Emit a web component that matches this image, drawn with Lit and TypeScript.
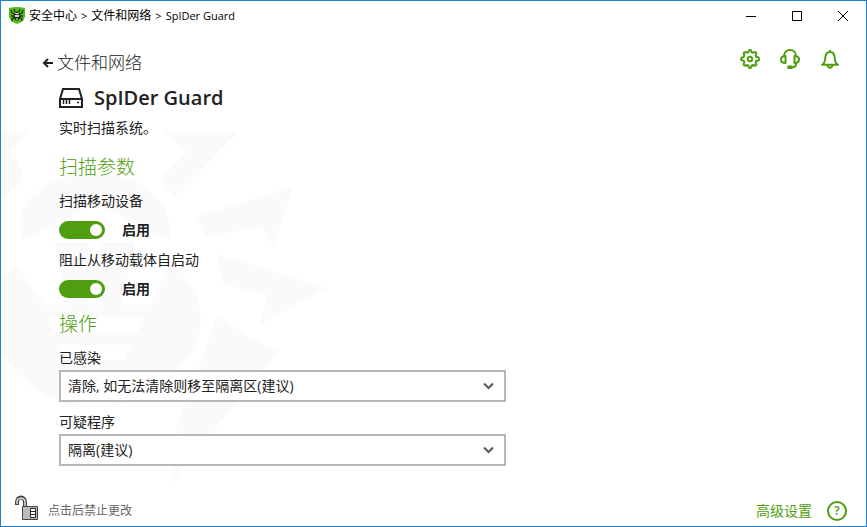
import { LitElement, html, css, svg } from "lit";
import { customElement, property } from "lit/decorators.js";

const gear = svg`<path d="M8.500 3.100Q8.600 1 10 1t1.500 2.100l1.600.7q1.600-1.300 2.700-.3t-.2 2.600l.8 1.900Q19 7.500 19 10t-2.600 1.500l-.8 2q1.300 1.700.3 2.700t-2.700-.3l-1.700.8Q11.500 19 10 19t-1.500-2.300l-1.700-.8q-1.700 1.300-2.700.3t.3-2.700l-.8-2Q1 11.500 1 10t2.600-2l.8-1.900q-1.300-1.600-.2-2.600t2.700.3z"/><circle cx="10" cy="10" r="2.200"/>`;
const headset = svg`<path d="M4 7.500C4 3.500 6.500 1 10 1s6 2.500 6 6.500M5.500 7C2.500 7 1 8.500 1 10.500S2.500 14 5.500 14zM14.500 7c3 0 4.500 1.500 4.500 3.500S17.500 14 14.500 14zM16 14v1.500c0 1.800-1.500 2.700-4 2.700"/><ellipse class="solid" cx="10" cy="18.300" rx="2" ry="1"/>`;
const bell = svg`<path d="M10 1v2M2 15.800c2.300-1.300 3-3.300 3.200-6.300C5.400 5.300 7 3 10 3s4.600 2.300 4.800 6.500c.2 3 .9 5 3.200 6.300zM7.700 16.500c.3 1.500 1.200 2.200 2.300 2.200s2-.7 2.300-2.200"/>`;

@customElement("toggle-row")
class ToggleRow extends LitElement {
  @property() name = "";

  static styles = css`
    :host { display: block; }
    .name { line-height: 20px; }
    .row { display: flex; align-items: center; gap: 17px; height: 37px; font-weight: 700; }
    .switch {
      appearance: none; flex: none; width: 46px; height: 18px; margin: 0;
      padding: 3px; border-radius: 9px; background: #aaa; display: flex;
    }
    .switch::before { content: ""; width: 12px; height: 12px; border-radius: 50%; background: #fff; }
    .switch:checked { background: #4f9e10; justify-content: flex-end; }
  `;

  render() {
    return html`
      <div class="name" id="name">${this.name}</div>
      <label class="row">
        <input class="switch" type="checkbox" role="switch" checked aria-describedby="name" />
        <span>启用</span>
      </label>
    `;
  }
}

@customElement("action-select")
class ActionSelect extends LitElement {
  @property() name = "";
  @property() value = "";

  static styles = css`
    :host { display: block; }
    .name { display: block; line-height: 20px; margin-bottom: 2px; }
    .box { position: relative; }
    .select {
      appearance: none; display: block; box-sizing: border-box; width: 100%; height: 32px;
      margin: 0; padding: 0 32px 0 7px; border: 2px solid #b7b7b7; border-radius: 0;
      background: #fff; color: #222; font: inherit;
    }
    .arrow {
      position: absolute; right: 12px; top: 11px; width: 11px; height: 10px;
      fill: none; stroke: #555; stroke-width: 2; pointer-events: none;
    }
  `;

  render() {
    return html`
      <label class="name" for="select">${this.name}</label>
      <div class="box">
        <select class="select" id="select"><option>${this.value}</option></select>
        <svg class="arrow" viewBox="0 0 11 10"><path d="M1 2.500 5.500 7 10 2.500" /></svg>
      </div>
    `;
  }
}

@customElement("app-root")
class AppRoot extends LitElement {
  static styles = css`
    :host { display: block; }
    .window {
      position: relative; box-sizing: border-box; min-height: 100vh; border: 1px solid #1c80d3;
      display: flex; flex-direction: column; background: #fff; color: #222;
      font: 14px/20px "Open Sans", "Noto Sans CJK SC", sans-serif;
    }
    .mark { position: absolute; left: 0; top: 131px; width: 327px; height: 354px; fill: #fafafa; pointer-events: none; }
    .mark .gap { fill: #fff; }
    .titlebar, .main, .footer { position: relative; }
    .titlebar { display: flex; align-items: center; height: 29px; padding-left: 8px; color: #000; font-size: 12px; }
    .logo { width: 16px; height: 17px; margin-right: 4px; }
    .path { flex: 1; display: flex; align-items: baseline; gap: 4px; }
    .latin { font-size: 11px; }
    button { border: 0; padding: 0; margin: 0; background: none; color: inherit; font: inherit; cursor: pointer; }
    .caption { width: 46px; height: 29px; display: grid; place-items: center; }
    .caption svg { width: 12px; height: 12px; fill: none; stroke: #000; }
    .main { flex: 1; display: flex; justify-content: space-between; align-items: flex-start; padding: 19px 26px 0 41px; }
    .column { flex: 0 1 464px; }
    .back { display: flex; align-items: center; gap: 4px; font-size: 17px; line-height: 28px; font-weight: 300; color: #222; text-decoration: none; }
    .back svg { width: 11px; height: 10px; fill: none; stroke: #222; stroke-width: 2; }
    .content { padding-left: 17px; }
    .heading { display: flex; align-items: center; gap: 11px; height: 41px; margin: 0; font-size: 20px; font-weight: 600; }
    .heading svg { width: 24px; height: 20px; fill: none; stroke: #222; stroke-width: 2; }
    .heading .thin { stroke-width: 1.500; }
    .about { margin: 0; }
    .group { margin: 15px 0 10px; font-size: 19px; line-height: 28px; font-weight: 300; color: #4f9e10; }
    .toggles { display: grid; gap: 2px; }
    .actions { display: grid; gap: 10px; }
    .toggles + .group { margin-top: 3px; }
    .tools { display: flex; gap: 20px; }
    .tools button { width: 20px; height: 20px; }
    .tools svg { display: block; width: 20px; height: 20px; fill: none; stroke: #4f9e10; stroke-width: 2; stroke-linejoin: round; }
    .tools .solid { fill: #4f9e10; }
    .footer { display: flex; justify-content: space-between; align-items: center; height: 31px; padding: 0 19px 0 13px; }
    .lock { display: flex; align-items: center; gap: 10px; color: #666; font-size: 12px; }
    .lock svg { width: 24px; height: 25px; margin-top: -6px; }
    .links { display: flex; align-items: center; gap: 15px; }
    .advanced { color: #4f9e10; text-decoration: none; }
    .help { width: 20px; height: 20px; box-sizing: border-box; border: 2px solid #4f9e10; border-radius: 50%; color: #4f9e10; font: 600 12px/16px "Open Sans", sans-serif; }
  `;

  render() {
    return html`
      <div class="window">
        <svg class="mark" viewBox="1 132 327 354" aria-hidden="true">
          <path d="M1 132H28L12 150 25 179 1 200zM162 132h77L175 197 159 178 188 152zM294 186 273 247 262 227 206 237 195 217zM217 254 327 288 259 325 268 296 223 284zM217 317 278 352 170 484 185 434 175 432z" />
          <path d="M23 241C17 222 22 203 36 193 45 183 65 174 95 174s50 9 58 20c15 14 20 30 15 47L95 203z" />
          <path d="M1 278 17 265 44 305H150L170 265C188 275 201 295 201 320c0 35-34 66-88 88l-8-23H86l-9 22C48 400 20 383 1 352z" />
          <path class="gap" d="M48 317h95l-5 15H54zM58 345h73l-6 15H62z" />
          <path d="M55 242h33l7 20 7-20h33l-14 63h-18l-8-22-8 22H69z" />
        </svg>
        <header class="titlebar">
          <svg class="logo" viewBox="0 0 16 17" aria-hidden="true">
            <path fill="#54bd18" d="M0 1q8-2 16 0v8q0 5-8 8-8-3-8-8z" />
            <path fill="none" stroke="#172b0c" stroke-width="1.300" d="M6 7 3 6 2 3M6 9 2 9M6 10 3 12v2M10 7l3-1 1-3M10 9h4M10 10l3 2v2M6 5 5 2M10 5l1-3" />
            <ellipse cx="8" cy="9" rx="3" ry="4.500" fill="#172b0c" />
            <path fill="none" stroke="#fff" d="m6 6 2 1 2-1M6 8l1 2 1-2 1 2 1-2M7 12h2" />
          </svg>
          <div class="path">
            <span>安全中心</span><span class="latin">&gt;</span>
            <span>文件和网络</span><span class="latin">&gt;</span>
            <span class="latin">SpIDer Guard</span>
          </div>
          <button class="caption" aria-label="最小化"><svg viewBox="0 0 12 12"><path d="M1 6.500h10" /></svg></button>
          <button class="caption" aria-label="最大化"><svg viewBox="0 0 12 12"><path d="M1.500 1.500h9v9h-9z" /></svg></button>
          <button class="caption" aria-label="关闭"><svg viewBox="0 0 12 12"><path d="m1 1 10 10M11 1 1 11" /></svg></button>
        </header>
        <main class="main">
          <div class="column">
            <a class="back" href="#"><svg viewBox="0 0 11 10"><path d="M11 5H2M6 1 2 5l4 4" /></svg>文件和网络</a>
            <div class="content">
              <h1 class="heading">
                <svg viewBox="0 0 24 20"><path d="M1 11 4 1h16l3 10v8H1zM1 11h22" /><path class="thin" d="M4.500 12v4M7.500 12v4M10.500 12v4M18 14.500h2" /></svg>
                SpIDer Guard
              </h1>
              <p class="about">实时扫描系统。</p>
              <h2 class="group">扫描参数</h2>
              <div class="toggles">
                <toggle-row name="扫描移动设备"></toggle-row>
                <toggle-row name="阻止从移动载体自启动"></toggle-row>
              </div>
              <h2 class="group">操作</h2>
              <div class="actions">
                <action-select name="已感染" value="清除, 如无法清除则移至隔离区(建议)"></action-select>
                <action-select name="可疑程序" value="隔离(建议)"></action-select>
              </div>
            </div>
          </div>
          <nav class="tools">
            <button aria-label="设置"><svg viewBox="0 0 20 20">${gear}</svg></button>
            <button aria-label="支持"><svg viewBox="0 0 20 20">${headset}</svg></button>
            <button aria-label="通知"><svg viewBox="0 0 20 20">${bell}</svg></button>
          </nav>
        </main>
        <footer class="footer">
          <button class="lock">
            <svg viewBox="0 0 24 25" aria-hidden="true">
              <path d="M3 10V7c0-6 8-6 8 0v4" fill="none" stroke="#444" stroke-width="4" />
              <path d="M3 9V7c0-5 8-5 8 0v4" fill="none" stroke="#ddd" stroke-width="1.500" />
              <path d="M8.500 11.500h15v13h-15z" fill="#bbb" stroke="#444" />
              <path d="M16.500 13.500h5v9h-5zM16.500 16.500h5M16.500 19.500h5" fill="#fff" stroke="#222" />
            </svg>
            点击后禁止更改
          </button>
          <div class="links">
            <a class="advanced" href="#">高级设置</a>
            <button class="help" aria-label="帮助">?</button>
          </div>
        </footer>
      </div>
    `;
  }
}
